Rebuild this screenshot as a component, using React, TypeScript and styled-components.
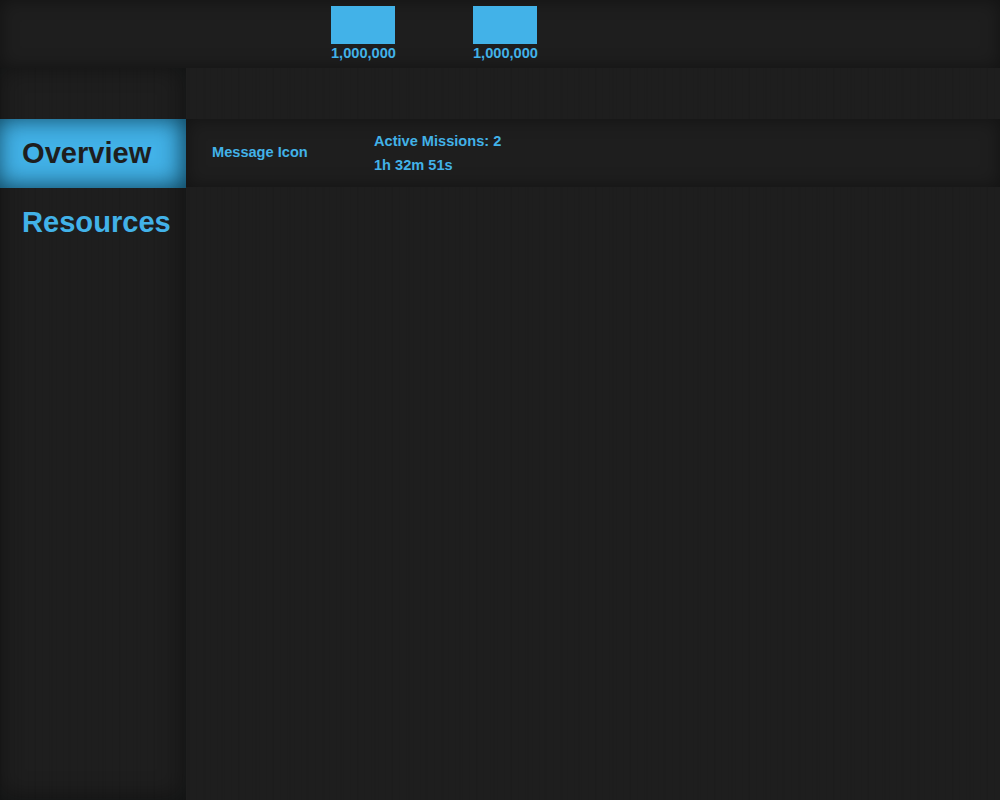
import React from 'react';
import styled, { createGlobalStyle } from 'styled-components';

const BLUE = '#42b2e8';
const INK = '#1e1e1e';

const GlobalStyle = createGlobalStyle`
  * { box-sizing: border-box; }
  body {
    margin: 0;
    background: ${INK};
    color: ${BLUE};
    font-family: "Liberation Sans", Arial, sans-serif;
    font-weight: 700;
  }
`;

const brushed = `
  repeating-linear-gradient(90deg, rgba(0, 0, 0, 0.035) 0 1px, transparent 1px 7px),
  repeating-linear-gradient(90deg, rgba(0, 0, 0, 0.035) 0 2px, transparent 2px 17px)
`;

const Page = styled.div`
  display: flex;
  flex-direction: column;
  width: 1000px;
  height: 800px;
  overflow: hidden;
  background: ${brushed}, ${INK};
`;

const TopBar = styled.header`
  display: flex;
  gap: 78px;
  height: 68px;
  flex: none;
  padding: 6px 0 0 331px;
  background: ${INK};
  box-shadow: inset 0 0 18px rgba(0, 0, 0, 0.4);
`;

const Resource = styled.div`
  width: 64px;
  white-space: nowrap;
`;

const Swatch = styled.div`
  height: 38px;
  background: ${BLUE};
`;

const Label = styled.div`
  font-size: 14.6px;
  line-height: 24px;
  white-space: nowrap;
`;

const Amount = styled(Label)`
  line-height: 18px;
`;

const Body = styled.div`
  display: flex;
  flex: 1;
`;

const Sidebar = styled.nav`
  width: 186px;
  flex: none;
  padding-top: 51px;
  background: ${brushed}, ${INK};
  box-shadow: inset -2px -2px 24px rgba(0, 5, 5, 0.45);
`;

const NavItem = styled.div<{ $active?: boolean }>`
  height: 69px;
  padding-left: 22px;
  font-size: 29.1px;
  line-height: 68px;
  color: ${({ $active }) => ($active ? INK : BLUE)};
  background: ${({ $active }) => ($active ? BLUE : 'transparent')};
  box-shadow: ${({ $active }) => ($active ? 'inset -3px -1px 24px rgba(0, 38, 54, 0.85)' : 'none')};
`;

const Main = styled.main`
  flex: 1;
  padding-top: 51px;
`;

const StatusBar = styled.section`
  display: flex;
  align-items: center;
  height: 68px;
  padding-left: 26px;
  background: ${INK};
  box-shadow: inset 0 0 18px rgba(0, 0, 0, 0.4);
`;

const Message = styled(Label)`
  width: 162px;
  padding-bottom: 2px;
`;

export default function App() {
  return (
    <>
      <GlobalStyle />
      <Page>
        <TopBar>
          {['1,000,000', '1,000,000'].map((amount, i) => (
            <Resource key={i}>
              <Swatch />
              <Amount>{amount}</Amount>
            </Resource>
          ))}
        </TopBar>
        <Body>
          <Sidebar>
            <NavItem $active>Overview</NavItem>
            <NavItem>Resources</NavItem>
          </Sidebar>
          <Main>
            <StatusBar>
              <Message>Message Icon</Message>
              <div>
                <Label>Active Missions: 2</Label>
                <Label>1h 32m 51s</Label>
              </div>
            </StatusBar>
          </Main>
        </Body>
      </Page>
    </>
  );
}
